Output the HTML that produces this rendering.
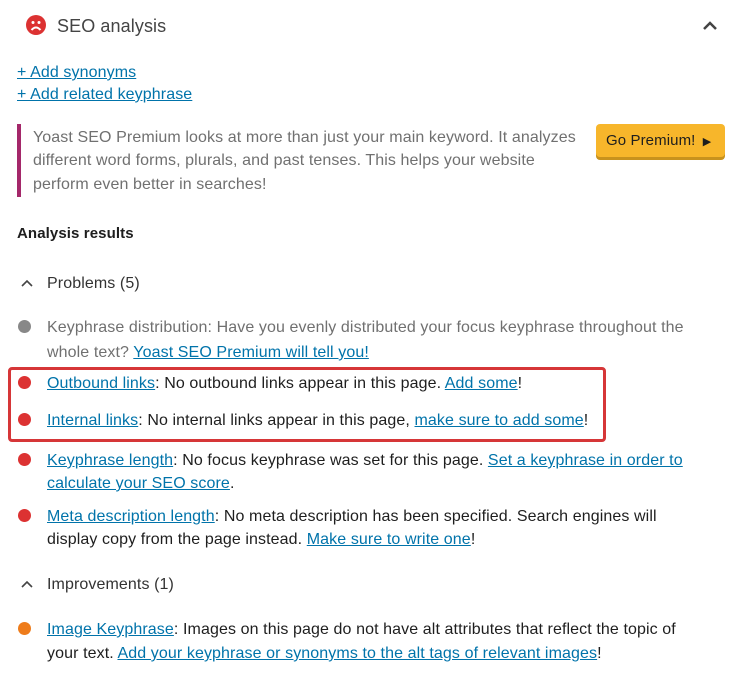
<!DOCTYPE html>
<html><head><meta charset="utf-8"><style>
body{margin:0;width:740px;height:685px;background:#fff;font-family:"Liberation Sans",sans-serif;font-size:16px;letter-spacing:0.1px;color:#1e1e1e;position:relative;overflow:hidden}
.a{position:absolute;white-space:nowrap;line-height:20px}
a{color:#0073aa;text-decoration:underline}
.g{color:#707070}
.dot{position:absolute;width:13px;height:13px;border-radius:50%}
.r{background:#dc3232}
</style></head><body>
<svg class="a" style="left:26px;top:15px" width="20" height="20" viewBox="0 0 20 20"><circle cx="10" cy="10" r="10" fill="#dc3232"/><circle cx="7" cy="7.5" r="1.5" fill="#fff"/><circle cx="13" cy="7.5" r="1.5" fill="#fff"/><path d="M5.5 15 Q10 10 14.5 15" stroke="#fff" stroke-width="2" fill="none"/></svg>
<div class="a" style="left:57px;top:16px;font-size:18px;color:#444">SEO analysis</div>
<svg class="a" style="left:702px;top:19px" width="16" height="12" viewBox="0 0 16 12"><path d="M2 10 L8 4 L14 10" stroke="#444" stroke-width="2.5" fill="none"/></svg>
<div class="a" style="left:17px;top:63px"><a>+ Add synonyms</a></div>
<div class="a" style="left:17px;top:85px"><a>+ Add related keyphrase</a></div>
<div style="position:absolute;left:17px;top:124px;width:4px;height:73px;background:#a4286a"></div>
<div class="a g" style="left:33px;top:128px">Yoast SEO Premium looks at more than just your main keyword. It analyzes</div>
<div class="a g" style="left:33px;top:151px">different word forms, plurals, and past tenses. This helps your website</div>
<div class="a g" style="left:33px;top:175px">perform even better in searches!</div>
<div style="position:absolute;left:596px;top:124px;width:129px;height:33px;background:#f7b62b;border-radius:4px;box-shadow:0 3px 0 #c8921d"></div>
<div class="a" style="left:606px;top:131px;color:#1e1e1e;font-size:15px">Go Premium! <span style="font-size:11px;margin-left:3px">▶</span></div>
<div class="a" style="left:17px;top:224px;font-weight:bold;font-size:15px">Analysis results</div>
<svg class="a" style="left:20px;top:278px" width="14" height="10" viewBox="0 0 14 10"><path d="M2 8 L7 3 L12 8" stroke="#444" stroke-width="1.6" fill="none"/></svg>
<div class="a" style="left:47px;top:274px;color:#333">Problems (5)</div>
<div class="dot" style="left:18px;top:320px;background:#888"></div>
<div class="a g" style="left:47px;top:318px">Keyphrase distribution: Have you evenly distributed your focus keyphrase throughout the</div>
<div class="a g" style="left:47px;top:343px">whole text? <a>Yoast SEO Premium will tell you!</a></div>
<div style="position:absolute;left:8px;top:367px;width:592px;height:69px;border:3px solid #d63638;border-radius:4px"></div>
<div class="dot r" style="left:18px;top:376px"></div>
<div class="a" style="left:47px;top:374px"><a>Outbound links</a>: No outbound links appear in this page. <a>Add some</a>!</div>
<div class="dot r" style="left:18px;top:413px"></div>
<div class="a" style="left:47px;top:411px"><a>Internal links</a>: No internal links appear in this page, <a>make sure to add some</a>!</div>
<div class="dot r" style="left:18px;top:453px"></div>
<div class="a" style="left:47px;top:451px"><a>Keyphrase length</a>: No focus keyphrase was set for this page. <a>Set a keyphrase in order to</a></div>
<div class="a" style="left:47px;top:474px"><a>calculate your SEO score</a>.</div>
<div class="dot r" style="left:18px;top:509px"></div>
<div class="a" style="left:47px;top:507px"><a>Meta description length</a>: No meta description has been specified. Search engines will</div>
<div class="a" style="left:47px;top:530px">display copy from the page instead. <a>Make sure to write one</a>!</div>
<svg class="a" style="left:20px;top:579px" width="14" height="10" viewBox="0 0 14 10"><path d="M2 8 L7 3 L12 8" stroke="#444" stroke-width="1.6" fill="none"/></svg>
<div class="a" style="left:47px;top:575px;color:#333">Improvements (1)</div>
<div class="dot" style="left:18px;top:622px;background:#ee7c1b"></div>
<div class="a" style="left:47px;top:620px"><a>Image Keyphrase</a>: Images on this page do not have alt attributes that reflect the topic of</div>
<div class="a" style="left:47px;top:644px">your text. <a>Add your keyphrase or synonyms to the alt tags of relevant images</a>!</div>
</body></html>
